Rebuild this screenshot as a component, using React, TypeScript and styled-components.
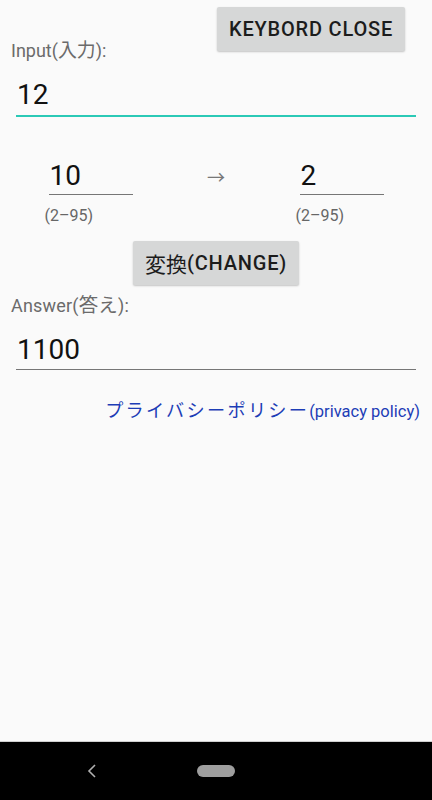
import React from 'react'
import styled, { createGlobalStyle } from "styled-components"

const GlobalStyle = createGlobalStyle`
  html, body {
    margin: 0;
    padding: 0;
    background: #fafafa;
  }
  * {
    box-sizing: border-box;
  }
`

const App: React.FC = () => {
  const [input, setInput] = React.useState("12")
  const [from, setFrom] = React.useState("10")
  const [to, setTo] = React.useState("2")
  const [answer, setAnswer] = React.useState("1100")

  const change = () => {
    const n = parseInt(input, parseInt(from))
    if (!isNaN(n)) setAnswer(n.toString(parseInt(to)).toUpperCase())
  }

  return (
    <Screen>
      <GlobalStyle />
      <Main>
        <Header>
          <Label>Input(<Jp scale={1.05}>入力</Jp>):</Label>
          <GrayButton>KEYBORD CLOSE</GrayButton>
        </Header>

        <Field active value={input} onChange={(e) => setInput(e.target.value)} />

        <BaseRow>
          <BaseColumn>
            <SmallField value={from} onChange={(e) => setFrom(e.target.value)} />
            <Hint>(2–95)</Hint>
          </BaseColumn>
          <Arrow>→</Arrow>
          <BaseColumn>
            <SmallField value={to} onChange={(e) => setTo(e.target.value)} />
            <Hint>(2–95)</Hint>
          </BaseColumn>
        </BaseRow>

        <Center>
          <GrayButton onClick={change}><ButtonJp scale={1.05}>変換</ButtonJp>(CHANGE)</GrayButton>
        </Center>

        <AnswerLabel>Answer(<Jp scale={1.08}>答え</Jp>):</AnswerLabel>
        <Field value={answer} readOnly />

        <LinkRow>
          <Policy href="#"><Kana scale={1.1}>プライバシーポリシー</Kana>(privacy policy)</Policy>
        </LinkRow>
      </Main>

      <NavBar>
        <svg width="10" height="14" viewBox="0 0 10 14">
          <polyline points="8,1 2,7 8,13" fill="none" stroke="#b0b0b0" strokeWidth="1.6" />
        </svg>
        <HomePill />
        <NavSpacer />
      </NavBar>
    </Screen>
  )
}

export default App

const Screen = styled.div`
width:432px;
min-height:100vh;
display:flex;
flex-direction:column;
background-color:#fafafa;
font-family:Roboto, "Noto Sans CJK JP", sans-serif;
`

const Main = styled.div`
flex:1;
display:flex;
flex-direction:column;
`

const Jp = styled.span<{ scale: number }>`
font-family:"Noto Sans CJK JP", sans-serif;
font-size:${(p) => p.scale}em;
line-height:1;
`

const ButtonJp = styled(Jp)`
font-weight:400;
letter-spacing:0;
`

const Kana = styled(Jp)`
letter-spacing:2.3px;
`

const Header = styled.div`
display:flex;
justify-content:space-between;
align-items:flex-start;
padding:7px 27px 0 11px;
`

const Label = styled.div`
margin-top:33px;
font-size:18px;
line-height:22px;
color:#6b6b6b;
`

const AnswerLabel = styled(Label)`
margin-top:9px;
margin-left:11px;
letter-spacing:0.2px;
`

const GrayButton = styled.button`
height:44px;
padding:0 12px;
border:none;
border-radius:2px;
background-color:#d6d7d7;
box-shadow:0 1px 2px rgba(0,0,0,0.22);
color:#1c1c1c;
font-family:Roboto, "Noto Sans CJK JP", sans-serif;
font-weight:500;
font-size:20px;
letter-spacing:0.8px;
white-space:nowrap;
display:flex;
align-items:center;
cursor:pointer;
`

const Field = styled.input<{ active?: boolean }>`
margin:14px 16px 0 16px;
height:${(p) => (p.active ? "41px" : "39px")};
padding:0 0 ${(p) => (p.active ? "3px" : "2px")} 1px;
border:none;
border-bottom:${(p) => (p.active ? "2px solid #2bc9b6" : "1px solid #767676")};
background:transparent;
font-family:Roboto, sans-serif;
font-size:28px;
line-height:36px;
color:#111;
outline:none;
`

const BaseRow = styled.div`
margin-top:40px;
display:flex;
justify-content:center;
align-items:flex-start;
gap:74px;
`

const BaseColumn = styled.div`
width:84px;
display:flex;
flex-direction:column;
`

const SmallField = styled.input`
width:84px;
height:38px;
padding:0 0 1px 1px;
border:none;
border-bottom:1px solid #767676;
background:transparent;
font-family:Roboto, sans-serif;
font-size:28px;
line-height:36px;
color:#111;
outline:none;
`

const Hint = styled.div`
margin:10px 0 0 -4px;
font-size:16px;
line-height:22px;
color:#666;
white-space:nowrap;
`

const Arrow = styled.div`
width:19px;
margin-top:4px;
font-family:"Noto Sans CJK JP", sans-serif;
font-size:18px;
line-height:30px;
color:#777;
display:flex;
justify-content:center;
`

const Center = styled.div`
margin-top:14px;
display:flex;
justify-content:center;
`

const LinkRow = styled.div`
margin-top:30px;
padding-right:12px;
display:flex;
justify-content:flex-end;
`

const Policy = styled.a`
font-size:16.5px;
line-height:24px;
color:#1d3db6;
text-decoration:none;
white-space:nowrap;
`

const NavBar = styled.div`
height:59px;
background-color:#000;
border-top:1px solid #cfcfcf;
display:flex;
align-items:center;
justify-content:space-between;
padding:0 87px 0 87px;
`

const HomePill = styled.div`
width:38px;
height:12px;
border-radius:6px;
background-color:#9e9e9e;
`

const NavSpacer = styled.div`
width:10px;
`
